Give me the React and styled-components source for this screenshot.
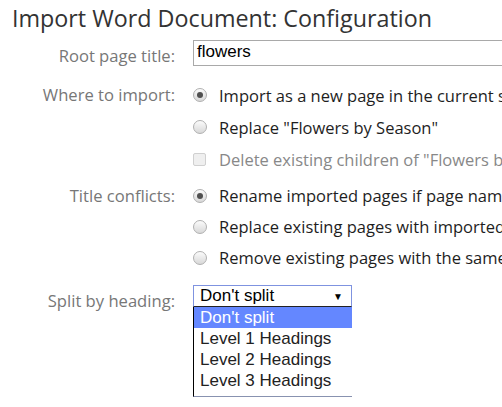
import React from 'react';
import styled, { createGlobalStyle } from 'styled-components';

const GlobalStyle = createGlobalStyle`
  html, body {
    margin: 0;
    padding: 0;
    background: #fff;
    overflow: hidden;
  }
  body {
    font-family: 'Open Sans', 'Noto Sans', sans-serif;
  }
`;

const Page = styled.div`
  width: 502px;
  height: 407px;
  overflow: hidden;
  white-space: nowrap;
`;

const Title = styled.h1`
  margin: 0;
  padding: 3px 0 0 12px;
  height: 36px;
  box-sizing: border-box;
  font-size: 23.3px;
  font-weight: 400;
  color: #333;
  line-height: 30px;
`;

const Form = styled.div`
  display: grid;
  grid-template-columns: 175px 1fr;
  column-gap: 18px;
  align-items: start;
`;

const Label = styled.div`
  text-align: right;
  color: #777;
  font-size: 16.6px;
  height: ${p => p.h || 32}px;
  line-height: ${p => p.h || 32}px;
  margin-top: ${p => p.mt || 0}px;
`;

const Field = styled.div`
  margin-top: ${p => p.mt || 0}px;
  display: flex;
  flex-direction: column;
`;

const TextInput = styled.div`
  height: 26px;
  box-sizing: border-box;
  border: 1px solid #a9a9a9;
  border-right: none;
  padding: 0 3px;
  font-family: 'Liberation Sans', Arial, sans-serif;
  font-size: 17px;
  line-height: 22px;
  color: #000;
`;

const Option = styled.div`
  display: flex;
  align-items: center;
  height: ${p => p.h || 32}px;
  font-size: 16.5px;
  color: ${p => (p.disabled ? '#888' : '#1e1e1e')};
`;

const Radio = styled.span`
  width: 14px;
  height: 14px;
  box-sizing: border-box;
  border-radius: 50%;
  border: 1px solid #b0b0b0;
  background: linear-gradient(#fbfbfb, #d8d8d8);
  margin-right: 12px;
  display: flex;
  align-items: center;
  justify-content: center;
  flex: none;

  &::after {
    content: '';
    width: 6px;
    height: 6px;
    border-radius: 50%;
    background: ${p => (p.checked ? '#505050' : 'transparent')};
  }
`;

const Check = styled.span`
  width: 13px;
  height: 13px;
  box-sizing: border-box;
  border-radius: 2px;
  border: 1px solid #d0d0d0;
  background: #efefef;
  margin-right: 13px;
  flex: none;
`;

const SelectWrap = styled.div`
  width: 159px;
`;

const SelectBox = styled.div`
  height: 22px;
  box-sizing: border-box;
  border: 1px solid #7f93e0;
  border-bottom-color: #222;
  display: flex;
  align-items: center;
  justify-content: space-between;
  padding: 0 8px 0 6px;
  font-family: 'Liberation Sans', Arial, sans-serif;
  font-size: 17px;
  color: #000;
`;

const Arrow = styled.span`
  font-size: 10px;
  color: #000;
`;

const List = styled.div`
  border-left: 1px solid #000;
  border-bottom: 1px solid #8892b0;
  padding-bottom: 5px;
`;

const ListItem = styled.div`
  height: 21px;
  line-height: 21px;
  padding-left: 6px;
  font-family: 'Liberation Sans', Arial, sans-serif;
  font-size: 17px;
  background: ${p => (p.active ? '#6487ff' : 'transparent')};
  color: ${p => (p.active ? '#fff' : '#222')};
`;

const App = () => {
  const levels = ["Don't split", 'Level 1 Headings', 'Level 2 Headings', 'Level 3 Headings'];

  return (
    <Page>
      <GlobalStyle />
      <Title>Import Word Document: Configuration</Title>
      <Form>
        <Label mt={10} h={20}>Root page title:</Label>
        <Field mt={4}>
          <TextInput>flowers</TextInput>
        </Field>

        <Label mt={13}>Where to import:</Label>
        <Field mt={13}>
          <Option><Radio checked />Import as a new page in the current space</Option>
          <Option><Radio />Replace "Flowers by Season"</Option>
          <Option disabled><Check />Delete existing children of "Flowers by Season"</Option>
        </Field>

        <Label mt={5}>Title conflicts:</Label>
        <Field mt={5}>
          <Option h={31}><Radio checked />Rename imported pages if page names already exist</Option>
          <Option h={31}><Radio />Replace existing pages with imported pages</Option>
          <Option h={31}><Radio />Remove existing pages with the same names</Option>
        </Field>

        <Label mt={12}>Split by heading:</Label>
        <Field mt={12}>
          <SelectWrap>
            <SelectBox>
              <span>Don't split</span>
              <Arrow>▼</Arrow>
            </SelectBox>
            <List>
              {levels.map((l, i) => (
                <ListItem key={l} active={i === 0}>{l}</ListItem>
              ))}
            </List>
          </SelectWrap>
        </Field>
      </Form>
    </Page>
  );
};

export default App;
